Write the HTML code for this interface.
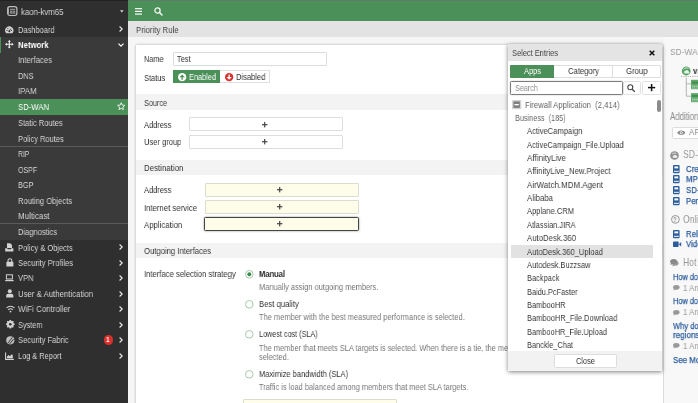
<!DOCTYPE html>
<html><head><meta charset="utf-8"><title>Priority Rule</title>
<style>
html,body{margin:0;padding:0}
body{width:698px;height:403px;overflow:hidden;position:relative;background:#f6f6f6;font-family:"Liberation Sans",sans-serif;font-size:9.3px;color:#333}
.a{position:absolute;box-sizing:border-box}
.t{position:absolute;white-space:pre;line-height:12px;transform-origin:0 0;will-change:transform}
svg{position:absolute;overflow:visible}
</style></head><body>
<div class="a" style="left:128px;top:0px;width:570px;height:21px;background:#4b9059;border-top:1px solid #5f7d65"></div>
<div class="a" style="left:128px;top:21px;width:570px;height:16px;background:#e3e3e3"></div>
<span class="t" style="left:136.00px;top:23.96px;color:#444;transform:scaleX(0.8412);">Priority Rule</span>
<svg style="left:134.6px;top:8px" width="8" height="7" viewBox="0 0 8 7"><g fill="#fff"><rect x="0" y="0.1" width="7" height="1.15"/><rect x="0" y="2.8" width="7" height="1.15"/><rect x="0" y="5.5" width="7" height="1.15"/></g></svg>
<svg style="left:154px;top:7.2px" width="9" height="9" viewBox="0 0 9 9"><circle cx="3.5" cy="3.5" r="2.6" fill="none" stroke="#f4f8f4" stroke-width="1.3"/><path d="M5.5 5.5L8 8" stroke="#f4f8f4" stroke-width="1.5" stroke-linecap="round"/></svg>
<div class="a" style="left:135.5px;top:44.5px;width:527px;height:370px;background:#fff;box-shadow:0 0 2.5px rgba(0,0,0,.32)"></div>
<div class="a" style="left:663.5px;top:37px;width:40px;height:370px;background:#f8f8f8"></div>
<span class="t" style="left:143.60px;top:53.26px;color:#333;transform:scaleX(0.7819);">Name</span>
<div class="a" style="left:172.6px;top:52.2px;width:154.2px;height:13.4px;background:#fff;border:1px solid #dcdcdc;border-radius:1px"></div>
<span class="t" style="left:177.00px;top:53.26px;color:#333;transform:scaleX(0.7971);">Test</span>
<span class="t" style="left:143.60px;top:72.36px;color:#333;transform:scaleX(0.8043);">Status</span>
<div class="a" style="left:172.6px;top:70px;width:47px;height:12.8px;background:#4b9059"></div>
<div class="a" style="left:219.6px;top:70px;width:50px;height:12.8px;background:#fff;border:1px solid #dfdfdf;border-left:none"></div>
<svg style="left:177.6px;top:72.7px" width="8.3" height="8.3" viewBox="0 0 8 8"><circle cx="4" cy="4" r="4" fill="#fff"/><path d="M4 1.4L6.6 4.1H4.65V6.5H3.35V4.1H1.4Z" fill="#4b9059"/></svg>
<span class="t" style="left:188.60px;top:71.16px;color:#fff;transform:scaleX(0.7912);">Enabled</span>
<svg style="left:224.8px;top:72.7px" width="8.3" height="8.3" viewBox="0 0 8 8"><circle cx="4" cy="4" r="4" fill="#d9302c"/><path d="M4 6.6L6.6 3.9H4.65V1.5H3.35V3.9H1.4Z" fill="#fff"/></svg>
<span class="t" style="left:235.60px;top:71.16px;color:#333;transform:scaleX(0.8124);">Disabled</span>
<div class="a" style="left:135.5px;top:94.4px;width:527px;height:15.4px;background:#f3f3f3"></div>
<span class="t" style="left:143.60px;top:96.56px;color:#333;transform:scaleX(0.7805);">Source</span>
<div class="a" style="left:135.5px;top:160px;width:527px;height:15px;background:#f3f3f3"></div>
<span class="t" style="left:143.60px;top:161.96px;color:#333;transform:scaleX(0.8470);">Destination</span>
<div class="a" style="left:135.5px;top:243px;width:527px;height:15px;background:#f3f3f3"></div>
<span class="t" style="left:143.60px;top:244.96px;color:#333;transform:scaleX(0.8257);">Outgoing Interfaces</span>
<span class="t" style="left:143.60px;top:118.86px;color:#333;transform:scaleX(0.8033);">Address</span>
<div class="a" style="left:188.6px;top:117.4px;width:154px;height:13.5px;background:#fff;border:1px solid #dedede;border-radius:1px"></div>
<svg style="left:261.7px;top:121.5px" width="5.4" height="5.4"><rect x="0" y="2.1" width="5.4" height="1.2" fill="#444"/><rect x="2.1" y="0" width="1.2" height="5.4" fill="#444"/></svg>
<span class="t" style="left:143.60px;top:135.86px;color:#333;transform:scaleX(0.8130);">User group</span>
<div class="a" style="left:188.6px;top:135.1px;width:154px;height:13.5px;background:#fff;border:1px solid #dedede;border-radius:1px"></div>
<svg style="left:261.7px;top:139.10000000000002px" width="5.4" height="5.4"><rect x="0" y="2.1" width="5.4" height="1.2" fill="#444"/><rect x="2.1" y="0" width="1.2" height="5.4" fill="#444"/></svg>
<span class="t" style="left:143.60px;top:183.66px;color:#333;transform:scaleX(0.8033);">Address</span>
<div class="a" style="left:204.5px;top:183.2px;width:154px;height:13.6px;background:#fdfde9;border:1px solid #dcdcd0;border-radius:1px"></div>
<svg style="left:277.3px;top:187.10000000000002px" width="5.4" height="5.4"><rect x="0" y="2.1" width="5.4" height="1.2" fill="#444"/><rect x="2.1" y="0" width="1.2" height="5.4" fill="#444"/></svg>
<span class="t" style="left:143.60px;top:201.66px;color:#333;transform:scaleX(0.8338);">Internet service</span>
<div class="a" style="left:204.5px;top:200.4px;width:154px;height:13.6px;background:#fdfde9;border:1px solid #dcdcd0;border-radius:1px"></div>
<svg style="left:277.3px;top:204.3px" width="5.4" height="5.4"><rect x="0" y="2.1" width="5.4" height="1.2" fill="#444"/><rect x="2.1" y="0" width="1.2" height="5.4" fill="#444"/></svg>
<span class="t" style="left:143.60px;top:218.86px;color:#333;transform:scaleX(0.8398);">Application</span>
<div class="a" style="left:204.3px;top:217.2px;width:154.4px;height:14px;background:#fdfde9;border:1px solid #444;border-radius:1.5px;box-shadow:0 0 2px rgba(0,0,0,.5)"></div>
<svg style="left:277.3px;top:221.3px" width="5.4" height="5.4"><rect x="0" y="2.1" width="5.4" height="1.2" fill="#444"/><rect x="2.1" y="0" width="1.2" height="5.4" fill="#444"/></svg>
<span class="t" style="left:143.60px;top:268.26px;color:#333;transform:scaleX(0.8262);">Interface selection strategy</span>
<svg style="left:244.5px;top:270.09999999999997px" width="8.6" height="8.6" viewBox="0 0 8.6 8.6"><circle cx="4.3" cy="4.3" r="3.8" fill="#fff" stroke="#9cc3a4" stroke-width="0.9"/><circle cx="4.3" cy="4.3" r="2" fill="#3f8a4d"/></svg>
<span class="t" style="left:259.00px;top:268.26px;color:#222;transform:scaleX(0.8117);font-weight:bold;">Manual</span>
<span class="t" style="left:259.00px;top:281.46px;color:#777;transform:scaleX(0.8023);">Manually assign outgoing members.</span>
<svg style="left:244.5px;top:300.09999999999997px" width="8.6" height="8.6" viewBox="0 0 8.6 8.6"><circle cx="4.3" cy="4.3" r="3.8" fill="#fff" stroke="#9cc3a4" stroke-width="0.9"/></svg>
<span class="t" style="left:259.00px;top:298.26px;color:#333;transform:scaleX(0.8281);">Best quality</span>
<span class="t" style="left:259.00px;top:311.46px;color:#777;transform:scaleX(0.8062);">The member with the best measured performance is selected.</span>
<svg style="left:244.5px;top:330.09999999999997px" width="8.6" height="8.6" viewBox="0 0 8.6 8.6"><circle cx="4.3" cy="4.3" r="3.8" fill="#fff" stroke="#9cc3a4" stroke-width="0.9"/></svg>
<span class="t" style="left:259.00px;top:328.26px;color:#333;transform:scaleX(0.7768);">Lowest cost (SLA)</span>
<span class="t" style="left:259.00px;top:341.86px;color:#777;transform:scaleX(0.7981);">The member that meets SLA targets is selected. When there is a tie, the member</span>
<span class="t" style="left:259.00px;top:350.86px;color:#777;transform:scaleX(0.8007);">selected.</span>
<svg style="left:244.5px;top:369.5px" width="8.6" height="8.6" viewBox="0 0 8.6 8.6"><circle cx="4.3" cy="4.3" r="3.8" fill="#fff" stroke="#9cc3a4" stroke-width="0.9"/></svg>
<span class="t" style="left:259.00px;top:367.66px;color:#333;transform:scaleX(0.8049);">Maximize bandwidth (SLA)</span>
<span class="t" style="left:259.00px;top:380.86px;color:#777;transform:scaleX(0.7992);">Traffic is load balanced among members that meet SLA targets.</span>
<div class="a" style="left:243.4px;top:399.4px;width:154px;height:13.2px;background:#fdfde9;border:1px solid #dcdcd0;border-radius:1px"></div>
<div class="a" style="left:0px;top:0px;width:128px;height:403px;background:#2f2f2f"></div>
<div class="a" style="left:0px;top:0px;width:128px;height:1px;background:#222"></div>
<div class="a" style="left:0px;top:37px;width:128px;height:203px;background:#3a3a3a"></div>
<div class="a" style="left:0px;top:37px;width:1.2px;height:15.5px;background:#4b9059"></div>
<div class="a" style="left:0px;top:98.8px;width:128px;height:15.8px;background:#4b9059"></div>
<div class="a" style="left:0px;top:145.6px;width:128px;height:1px;background:#5a5a5a"></div>
<div class="a" style="left:0px;top:223.4px;width:128px;height:1px;background:#5a5a5a"></div>
<span class="t" style="left:20.60px;top:5.76px;color:#d6d6d6;transform:scaleX(0.8373);">kaon-kvm65</span>
<span class="t" style="left:18.00px;top:23.56px;color:#d6d6d6;transform:scaleX(0.8047);">Dashboard</span>
<svg style="left:118.6px;top:26.4px" width="4" height="6" viewBox="0 0 4 6"><path d="M0.6 0.5L3.2 3L0.6 5.5" fill="none" stroke="#eee" stroke-width="1.1"/></svg>
<span class="t" style="left:18.00px;top:38.76px;color:#fff;transform:scaleX(0.8341);font-weight:bold;">Network</span>
<span class="t" style="left:18.00px;top:54.36px;color:#d6d6d6;transform:scaleX(0.8328);">Interfaces</span>
<span class="t" style="left:18.00px;top:69.76px;color:#d6d6d6;transform:scaleX(0.7841);">DNS</span>
<span class="t" style="left:18.00px;top:85.16px;color:#d6d6d6;transform:scaleX(0.8437);">IPAM</span>
<span class="t" style="left:18.00px;top:100.76px;color:#fff;transform:scaleX(0.8298);">SD-WAN</span>
<span class="t" style="left:18.00px;top:117.16px;color:#d6d6d6;transform:scaleX(0.8066);">Static Routes</span>
<span class="t" style="left:18.00px;top:132.56px;color:#d6d6d6;transform:scaleX(0.8022);">Policy Routes</span>
<span class="t" style="left:18.00px;top:148.36px;color:#d6d6d6;transform:scaleX(0.7355);">RIP</span>
<span class="t" style="left:18.00px;top:163.76px;color:#d6d6d6;transform:scaleX(0.7506);">OSPF</span>
<span class="t" style="left:18.00px;top:179.36px;color:#d6d6d6;transform:scaleX(0.7841);">BGP</span>
<span class="t" style="left:18.00px;top:194.76px;color:#d6d6d6;transform:scaleX(0.8162);">Routing Objects</span>
<span class="t" style="left:18.00px;top:210.16px;color:#d6d6d6;transform:scaleX(0.8613);">Multicast</span>
<span class="t" style="left:18.00px;top:225.96px;color:#d6d6d6;transform:scaleX(0.8114);">Diagnostics</span>
<span class="t" style="left:18.00px;top:241.56px;color:#d6d6d6;transform:scaleX(0.8096);">Policy &amp; Objects</span>
<svg style="left:118.6px;top:244.4px" width="4" height="6" viewBox="0 0 4 6"><path d="M0.6 0.5L3.2 3L0.6 5.5" fill="none" stroke="#eee" stroke-width="1.1"/></svg>
<span class="t" style="left:18.00px;top:257.16px;color:#d6d6d6;transform:scaleX(0.8188);">Security Profiles</span>
<svg style="left:118.6px;top:260px" width="4" height="6" viewBox="0 0 4 6"><path d="M0.6 0.5L3.2 3L0.6 5.5" fill="none" stroke="#eee" stroke-width="1.1"/></svg>
<span class="t" style="left:18.00px;top:272.36px;color:#d6d6d6;transform:scaleX(0.8052);">VPN</span>
<svg style="left:118.6px;top:275.2px" width="4" height="6" viewBox="0 0 4 6"><path d="M0.6 0.5L3.2 3L0.6 5.5" fill="none" stroke="#eee" stroke-width="1.1"/></svg>
<span class="t" style="left:18.00px;top:287.96px;color:#d6d6d6;transform:scaleX(0.8389);">User &amp; Authentication</span>
<svg style="left:118.6px;top:290.8px" width="4" height="6" viewBox="0 0 4 6"><path d="M0.6 0.5L3.2 3L0.6 5.5" fill="none" stroke="#eee" stroke-width="1.1"/></svg>
<span class="t" style="left:18.00px;top:303.36px;color:#d6d6d6;transform:scaleX(0.8522);">WiFi Controller</span>
<svg style="left:118.6px;top:306.2px" width="4" height="6" viewBox="0 0 4 6"><path d="M0.6 0.5L3.2 3L0.6 5.5" fill="none" stroke="#eee" stroke-width="1.1"/></svg>
<span class="t" style="left:18.00px;top:318.76px;color:#d6d6d6;transform:scaleX(0.7871);">System</span>
<svg style="left:118.6px;top:321.6px" width="4" height="6" viewBox="0 0 4 6"><path d="M0.6 0.5L3.2 3L0.6 5.5" fill="none" stroke="#eee" stroke-width="1.1"/></svg>
<span class="t" style="left:18.00px;top:334.16px;color:#d6d6d6;transform:scaleX(0.8161);">Security Fabric</span>
<svg style="left:118.6px;top:337px" width="4" height="6" viewBox="0 0 4 6"><path d="M0.6 0.5L3.2 3L0.6 5.5" fill="none" stroke="#eee" stroke-width="1.1"/></svg>
<span class="t" style="left:18.00px;top:349.96px;color:#d6d6d6;transform:scaleX(0.7920);">Log &amp; Report</span>
<svg style="left:118.6px;top:352.8px" width="4" height="6" viewBox="0 0 4 6"><path d="M0.6 0.5L3.2 3L0.6 5.5" fill="none" stroke="#eee" stroke-width="1.1"/></svg>
<svg style="left:118.2px;top:42.8px" width="6" height="4" viewBox="0 0 6 4"><path d="M0.5 0.6L3 3.2L5.5 0.6" fill="none" stroke="#fff" stroke-width="1.2"/></svg>
<svg style="left:119.6px;top:10px" width="4" height="3" viewBox="0 0 4 3"><path d="M0 0.3H3.6L1.8 2.4Z" fill="#ddd"/></svg>
<svg style="left:117.2px;top:102.2px" width="8.4" height="8.4" viewBox="0 0 10 10"><path d="M5 0.9L6.25 3.7L9.3 4L7 6.05L7.65 9.1L5 7.5L2.35 9.1L3 6.05L0.7 4L3.75 3.7Z" fill="none" stroke="#fff" stroke-width="1"/></svg>
<div class="a" style="left:103.6px;top:335.4px;width:9.2px;height:9.2px;border-radius:50%;background:#d9302c"></div>
<span class="t" style="left:106.44px;top:334.23px;color:#fff;transform:scaleX(0.8450);font-size:7.5px;font-weight:bold;">1</span>
<svg style="left:7.3px;top:5.800000000000001px" width="10.6" height="10.2" viewBox="0 0 10.6 10.2"><rect x="0.7" y="0.7" width="9.2" height="8.8" rx="2.2" fill="none" stroke="#bdbdbd" stroke-width="1.2"/><path d="M1.2 2.4V7.8" stroke="#cfcfcf" stroke-width="1"/><rect x="3" y="2.8" width="5.2" height="1.1" fill="#9a9a9a"/><rect x="3" y="4.7" width="5.2" height="2.9" fill="#a8a8a8"/><path d="M3 6.1H8.2M5.6 4.7V7.6" stroke="#2f2f2f" stroke-width="0.5"/></svg>
<svg style="left:5.4px;top:25.7px" width="8.6" height="8" viewBox="0 0 8.6 8"><path d="M1.2 7.2A4.1 4.1 0 1 1 7.4 7.2Z" fill="#d2d2d2"/><circle cx="4.3" cy="5.2" r="1" fill="#2f2f2f"/><path d="M4.3 5.2L5.8 2.6" stroke="#2f2f2f" stroke-width="0.8"/><circle cx="2" cy="4.4" r="0.55" fill="#2f2f2f"/><circle cx="6.6" cy="4.4" r="0.55" fill="#2f2f2f"/><circle cx="2.9" cy="2.5" r="0.55" fill="#2f2f2f"/></svg>
<svg style="left:5.4px;top:40.4px" width="8.6" height="8.6" viewBox="0 0 9 9"><path d="M4.5 0L6.1 1.9H5.05V3.95H7.1V2.9L9 4.5L7.1 6.1V5.05H5.05V7.1H6.1L4.5 9L2.9 7.1H3.95V5.05H1.9V6.1L0 4.5L1.9 2.9V3.95H3.95V1.9H2.9Z" fill="#f6f6f6"/></svg>
<svg style="left:5.4px;top:242.9px" width="8.8" height="9" viewBox="0 0 8.8 9"><path d="M2 0.2H5.2L7 2V5H2Z" fill="#d2d2d2"/><path d="M0.2 5.2H2.2L2.8 6.2H5.8L6.4 5.2H8.4V8.6H0.2Z" fill="#d2d2d2"/></svg>
<svg style="left:6px;top:258.3px" width="8" height="9" viewBox="0 0 8 9"><path d="M2 4V2.6A1.9 1.9 0 0 1 5.8 2.6V4" fill="none" stroke="#d2d2d2" stroke-width="1.1"/><rect x="0.4" y="3.8" width="7" height="4.8" rx="0.6" fill="#d2d2d2"/></svg>
<svg style="left:5.4px;top:274.2px" width="9" height="8" viewBox="0 0 9 8"><rect x="1.4" y="0.8" width="6" height="4.2" fill="none" stroke="#d2d2d2" stroke-width="1"/><rect x="0.2" y="6" width="8.4" height="1.2" fill="#d2d2d2"/></svg>
<svg style="left:6px;top:289.1px" width="8" height="9" viewBox="0 0 8 9"><circle cx="3.8" cy="2.2" r="2" fill="#d2d2d2"/><path d="M0.2 8.6V6.6A2 2 0 0 1 2.2 4.8H5.4A2 2 0 0 1 7.4 6.6V8.6Z" fill="#d2d2d2"/></svg>
<svg style="left:5.6px;top:305.0px" width="9" height="8" viewBox="0 0 9 8"><path d="M0.5 3A5.4 5.4 0 0 1 8.5 3" fill="none" stroke="#d2d2d2" stroke-width="1.1"/><path d="M2.2 4.8A3.2 3.2 0 0 1 6.8 4.8" fill="none" stroke="#d2d2d2" stroke-width="1.1"/><circle cx="4.5" cy="6.6" r="0.9" fill="#d2d2d2"/></svg>
<svg style="left:5.6px;top:320.3px" width="8.6" height="8.6" viewBox="0 0 8.6 8.6"><circle cx="4.3" cy="4.3" r="2.5" fill="none" stroke="#d2d2d2" stroke-width="1.9"/><g stroke="#d2d2d2" stroke-width="1.6"><path d="M4.3 0V8.6M0 4.3H8.6M1.3 1.3L7.3 7.3M7.3 1.3L1.3 7.3"/></g><circle cx="4.3" cy="4.3" r="1.3" fill="#2f2f2f"/></svg>
<svg style="left:5.6px;top:335.7px" width="8.6" height="8.6" viewBox="0 0 8.6 8.6"><circle cx="4.3" cy="4.3" r="4.1" fill="#bdbdbd"/><path d="M2 7L6.4 1.4M3.6 8L7.6 3" stroke="#2f2f2f" stroke-width="0.9" fill="none"/></svg>
<svg style="left:5.4px;top:351.6px" width="9" height="8" viewBox="0 0 9 8"><path d="M0.6 0.6V7.4H8.8" fill="none" stroke="#d2d2d2" stroke-width="1.1"/><path d="M2 6.2V4.4L3.6 3L5 4.2L6.6 2.2L7.8 3.2V6.2Z" fill="#d2d2d2"/></svg>
<span class="t" style="left:669.90px;top:46.44px;color:#999;transform:scaleX(0.8517);font-size:9.9px;">SD-WAN</span>
<svg style="left:680px;top:64.5px" width="20" height="40" viewBox="0 0 20 40"><circle cx="6.2" cy="6" r="4.4" fill="#57a266"/><path d="M3.4 4.4C4.6 2.6 7 2.4 8.4 3.6" fill="none" stroke="#dff0e2" stroke-width="0.9"/><path d="M4.6 8.4A1.5 1.5 0 0 1 5.4 5.8A2 2 0 0 1 8.8 6.4A1.2 1.2 0 0 1 8.8 8.4Z" fill="#e6f3e8"/><path d="M1 11.4H20" stroke="#888" stroke-width="0.7" stroke-dasharray="0.9 0.9"/><path d="M6.3 12.4V31.2H11M6.3 18.8H11" fill="none" stroke="#9a9a9a" stroke-width="0.7"/><rect x="11" y="14.8" width="9" height="9" fill="#5fa76d"/><rect x="11" y="28.1" width="9" height="8.8" fill="#5fa76d"/><path d="M12 17.6H20M12 30.9H20" stroke="#3f8a4d" stroke-width="1.6"/><path d="M12 21.4H20M12 34.6H20" stroke="#a9d3b1" stroke-width="2" stroke-dasharray="1.4 0.7"/><path d="M11 24.5H20M11 37.6H20" stroke="#8dbf97" stroke-width="0.6" stroke-dasharray="0.8 0.8"/></svg>
<span class="t" style="left:692.80px;top:64.66px;color:#333;transform:scaleX(0.8450);font-weight:bold;">vi</span>
<span class="t" style="left:670.20px;top:111.23px;color:#8a8a8a;transform:scaleX(0.7878);font-size:10px;">Additional</span>
<div class="a" style="left:672.2px;top:126.6px;width:40px;height:12.2px;background:#fff;border:1px solid #ddd;border-radius:1.5px"></div>
<svg style="left:676.8px;top:129.6px" width="8.6" height="5.6" viewBox="0 0 8.6 5.6"><path d="M0.2 2.8C2 -0.2 6.6 -0.2 8.4 2.8C6.6 5.8 2 5.8 0.2 2.8Z" fill="#8a8a8a"/><circle cx="4.3" cy="2.8" r="1.5" fill="#fff"/><circle cx="4.3" cy="2.8" r="0.8" fill="#8a8a8a"/></svg>
<span class="t" style="left:688.70px;top:126.25px;color:#8a8a8a;transform:scaleX(0.8450);font-size:9.6px;">API</span>
<svg style="left:670.4px;top:150.6px" width="9" height="9" viewBox="0 0 9 9"><circle cx="4.5" cy="4.5" r="4.3" fill="#8f8f8f"/><path d="M2 3.2C3 1.8 5 1.6 6.4 2.6" fill="none" stroke="#f4f4f4" stroke-width="0.8"/><path d="M3 6.8A1.3 1.3 0 0 1 3.8 4.6A1.8 1.8 0 0 1 6.8 5A1.1 1.1 0 0 1 6.8 6.8Z" fill="#f4f4f4"/></svg>
<span class="t" style="left:682.80px;top:149.03px;color:#999;transform:scaleX(0.8450);font-size:10.2px;">SD-W</span>
<svg style="left:673.3px;top:164.9px" width="6.6" height="8.2" viewBox="0 0 6.6 8.2"><rect x="0" y="0" width="6.6" height="8.2" rx="1" fill="#2b5c9c"/><rect x="1.4" y="1.4" width="3.8" height="2" fill="#fff"/><rect x="1" y="5.8" width="4.8" height="1" fill="#fff"/></svg>
<span class="t" style="left:685.60px;top:162.86px;color:#2b5c9c;transform:scaleX(0.8450);-webkit-text-stroke:0.25px #2b5c9c;">Crea</span>
<svg style="left:673.3px;top:175.3px" width="6.6" height="8.2" viewBox="0 0 6.6 8.2"><rect x="0" y="0" width="6.6" height="8.2" rx="1" fill="#2b5c9c"/><rect x="1.4" y="1.4" width="3.8" height="2" fill="#fff"/><rect x="1" y="5.8" width="4.8" height="1" fill="#fff"/></svg>
<span class="t" style="left:685.60px;top:173.26px;color:#2b5c9c;transform:scaleX(0.8450);-webkit-text-stroke:0.25px #2b5c9c;">MPL</span>
<svg style="left:673.3px;top:185.70000000000002px" width="6.6" height="8.2" viewBox="0 0 6.6 8.2"><rect x="0" y="0" width="6.6" height="8.2" rx="1" fill="#2b5c9c"/><rect x="1.4" y="1.4" width="3.8" height="2" fill="#fff"/><rect x="1" y="5.8" width="4.8" height="1" fill="#fff"/></svg>
<span class="t" style="left:685.60px;top:183.66px;color:#2b5c9c;transform:scaleX(0.8450);-webkit-text-stroke:0.25px #2b5c9c;">SD-</span>
<svg style="left:673.3px;top:196.9px" width="6.6" height="8.2" viewBox="0 0 6.6 8.2"><rect x="0" y="0" width="6.6" height="8.2" rx="1" fill="#2b5c9c"/><rect x="1.4" y="1.4" width="3.8" height="2" fill="#fff"/><rect x="1" y="5.8" width="4.8" height="1" fill="#fff"/></svg>
<span class="t" style="left:685.60px;top:194.86px;color:#2b5c9c;transform:scaleX(0.8450);-webkit-text-stroke:0.25px #2b5c9c;">Per </span>
<svg style="left:670.6px;top:215.4px" width="8.8" height="8.8" viewBox="0 0 8.8 8.8"><circle cx="4.4" cy="4.4" r="3.9" fill="none" stroke="#8a8a8a" stroke-width="0.9"/></svg>
<span class="t" style="left:673.19px;top:213.74px;color:#8a8a8a;transform:scaleX(0.8450);font-size:7px;font-weight:bold;">?</span>
<span class="t" style="left:683.00px;top:213.83px;color:#999;transform:scaleX(0.8450);font-size:10.2px;">Online</span>
<svg style="left:673.3px;top:229.70000000000002px" width="6.6" height="8.2" viewBox="0 0 6.6 8.2"><rect x="0" y="0" width="6.6" height="8.2" rx="1" fill="#2b5c9c"/><rect x="1.4" y="1.4" width="3.8" height="2" fill="#fff"/><rect x="1" y="5.8" width="4.8" height="1" fill="#fff"/></svg>
<span class="t" style="left:685.60px;top:227.66px;color:#2b5c9c;transform:scaleX(0.8450);-webkit-text-stroke:0.25px #2b5c9c;">Rele</span>
<svg style="left:673px;top:241.2px" width="8.4" height="6.4" viewBox="0 0 8.4 6.4"><rect x="0" y="0.4" width="5.6" height="5.6" rx="0.8" fill="#2b5c9c"/><path d="M5.8 3.2L8.2 1V5.4Z" fill="#2b5c9c"/></svg>
<span class="t" style="left:685.60px;top:238.26px;color:#2b5c9c;transform:scaleX(0.8450);-webkit-text-stroke:0.25px #2b5c9c;">Vide</span>
<svg style="left:672.4px;top:261.15px" width="6.6499999999999995" height="5.699999999999999" viewBox="0 0 7 6"><ellipse cx="3.5" cy="2.5" rx="3.4" ry="2.4" fill="#9a9a9a"/><path d="M1 3.6L0.4 5.8L3 4.6Z" fill="#9a9a9a"/></svg>
<svg style="left:669.8px;top:258.85px" width="7.3500000000000005" height="6.300000000000001" viewBox="0 0 7 6"><ellipse cx="3.5" cy="2.5" rx="3.4" ry="2.4" fill="#8a8a8a"/><path d="M1 3.6L0.4 5.8L3 4.6Z" fill="#8a8a8a"/></svg>
<span class="t" style="left:683.00px;top:257.03px;color:#999;transform:scaleX(0.8450);font-size:10.2px;">Hot Q</span>
<span class="t" style="left:672.60px;top:270.86px;color:#2b5c9c;transform:scaleX(0.7929);-webkit-text-stroke:0.25px #2b5c9c;">How do</span>
<span class="t" style="left:672.60px;top:295.16px;color:#2b5c9c;transform:scaleX(0.7929);-webkit-text-stroke:0.25px #2b5c9c;">How do</span>
<span class="t" style="left:672.60px;top:319.86px;color:#2b5c9c;transform:scaleX(0.8119);-webkit-text-stroke:0.25px #2b5c9c;">Why do</span>
<span class="t" style="left:672.60px;top:329.36px;color:#2b5c9c;transform:scaleX(0.8690);-webkit-text-stroke:0.25px #2b5c9c;">regions?</span>
<span class="t" style="left:672.60px;top:353.86px;color:#2b5c9c;transform:scaleX(0.8558);-webkit-text-stroke:0.25px #2b5c9c;">See More</span>
<svg style="left:672.6px;top:285.15px" width="6.6499999999999995" height="5.699999999999999" viewBox="0 0 7 6"><ellipse cx="3.5" cy="2.5" rx="3.4" ry="2.4" fill="#999"/><path d="M1 3.6L0.4 5.8L3 4.6Z" fill="#999"/></svg>
<span class="t" style="left:683.00px;top:281.86px;color:#999;transform:scaleX(0.8450);">1 Ans</span>
<svg style="left:672.6px;top:309.65px" width="6.6499999999999995" height="5.699999999999999" viewBox="0 0 7 6"><ellipse cx="3.5" cy="2.5" rx="3.4" ry="2.4" fill="#999"/><path d="M1 3.6L0.4 5.8L3 4.6Z" fill="#999"/></svg>
<span class="t" style="left:683.00px;top:306.36px;color:#999;transform:scaleX(0.8450);">1 Ans</span>
<svg style="left:672.6px;top:343.34999999999997px" width="6.6499999999999995" height="5.699999999999999" viewBox="0 0 7 6"><ellipse cx="3.5" cy="2.5" rx="3.4" ry="2.4" fill="#999"/><path d="M1 3.6L0.4 5.8L3 4.6Z" fill="#999"/></svg>
<span class="t" style="left:683.00px;top:340.06px;color:#999;transform:scaleX(0.8450);">1 Ans</span>
<div class="a" style="left:508px;top:44.4px;width:154px;height:326.6px;background:#fff;box-shadow:0 1px 4px rgba(0,0,0,.5);border-radius:1px"></div>
<div class="a" style="left:508px;top:44.4px;width:154px;height:16.2px;background:#e4e4e4;border-radius:1px 1px 0 0"></div>
<span class="t" style="left:512.00px;top:46.86px;color:#444;transform:scaleX(0.8020);">Select Entries</span>
<svg style="left:649.4px;top:50px" width="6" height="6" viewBox="0 0 6 6"><path d="M0.7 0.7L5.3 5.3M5.3 0.7L0.7 5.3" stroke="#111" stroke-width="1.5"/></svg>
<div class="a" style="left:510.4px;top:64.8px;width:150.2px;height:12.8px;background:#fff;border:1px solid #ddd;border-radius:1px"></div>
<div class="a" style="left:510.4px;top:64.8px;width:44px;height:12.8px;background:#4b9059;border-radius:1px 0 0 1px"></div>
<div class="a" style="left:612px;top:64.8px;width:1px;height:12.8px;background:#ddd"></div>
<span class="t" style="left:524.00px;top:65.46px;color:#fff;transform:scaleX(0.8018);">Apps</span>
<span class="t" style="left:567.60px;top:65.46px;color:#333;transform:scaleX(0.8215);">Category</span>
<span class="t" style="left:625.65px;top:65.46px;color:#333;transform:scaleX(0.8319);">Group</span>
<div class="a" style="left:510.4px;top:81.4px;width:112.6px;height:13.2px;background:#fff;border:1px solid #7c7c7c;border-radius:1.5px;box-shadow:0 0 1.5px rgba(0,0,0,.3)"></div>
<span class="t" style="left:515.00px;top:82.06px;color:#8c8c8c;transform:scaleX(0.7737);">Search</span>
<div class="a" style="left:623.4px;top:81.2px;width:17.4px;height:13.4px;background:#fff;border:1px solid #e2e2e2;border-radius:1.5px"></div>
<svg style="left:626.6px;top:83.6px" width="8.4" height="8.4" viewBox="0 0 8.4 8.4"><circle cx="3.3" cy="3.3" r="2.5" fill="none" stroke="#444" stroke-width="1.1"/><path d="M5.2 5.2L7.8 7.8" stroke="#444" stroke-width="1.3"/></svg>
<div class="a" style="left:642.2px;top:81.2px;width:18.6px;height:13.4px;background:#fff;border:1px solid #e2e2e2;border-radius:1.5px"></div>
<svg style="left:648.0px;top:84.4px" width="7.2" height="7.2"><rect x="0" y="2.85" width="7.2" height="1.5" fill="#111"/><rect x="2.85" y="0" width="1.5" height="7.2" fill="#111"/></svg>
<svg style="left:512.3px;top:100.2px" width="9.3" height="9.3" viewBox="0 0 8.6 8.6"><rect width="8.6" height="8.6" rx="0.8" fill="#d4d4d4"/><rect x="1.3" y="1.3" width="6" height="6" fill="#7e7e7e"/><rect x="2.3" y="3.7" width="4" height="1.2" fill="#fff"/></svg>
<span class="t" style="left:525.00px;top:98.86px;color:#666;transform:scaleX(0.8283);">Firewall Application  (2,414)</span>
<span class="t" style="left:514.60px;top:112.46px;color:#666;transform:scaleX(0.7834);">Business  (185)</span>
<div class="a" style="left:511px;top:245px;width:142px;height:13.2px;background:#e2e2e2"></div>
<span class="t" style="left:527.00px;top:125.26px;color:#3a3a3a;transform:scaleX(0.8183);">ActiveCampaign</span>
<span class="t" style="left:527.00px;top:138.63px;color:#3a3a3a;transform:scaleX(0.8057);">ActiveCampaign_File.Upload</span>
<span class="t" style="left:527.00px;top:152.00px;color:#3a3a3a;transform:scaleX(0.8706);">AffinityLive</span>
<span class="t" style="left:527.00px;top:165.37px;color:#3a3a3a;transform:scaleX(0.8397);">AffinityLive_New.Project</span>
<span class="t" style="left:527.00px;top:178.74px;color:#3a3a3a;transform:scaleX(0.8536);">AirWatch.MDM.Agent</span>
<span class="t" style="left:527.00px;top:192.11px;color:#3a3a3a;transform:scaleX(0.8383);">Alibaba</span>
<span class="t" style="left:527.00px;top:205.48px;color:#3a3a3a;transform:scaleX(0.8121);">Applane.CRM</span>
<span class="t" style="left:527.00px;top:218.85px;color:#3a3a3a;transform:scaleX(0.8039);">Atlassian.JIRA</span>
<span class="t" style="left:527.00px;top:232.22px;color:#3a3a3a;transform:scaleX(0.8390);">AutoDesk.360</span>
<span class="t" style="left:527.00px;top:245.59px;color:#3a3a3a;transform:scaleX(0.8168);">AutoDesk.360_Upload</span>
<span class="t" style="left:527.00px;top:258.96px;color:#3a3a3a;transform:scaleX(0.8097);">Autodesk.Buzzsaw</span>
<span class="t" style="left:527.00px;top:272.33px;color:#3a3a3a;transform:scaleX(0.8037);">Backpack</span>
<span class="t" style="left:527.00px;top:285.70px;color:#3a3a3a;transform:scaleX(0.7961);">Baidu.PcFaster</span>
<span class="t" style="left:527.00px;top:299.07px;color:#3a3a3a;transform:scaleX(0.8031);">BambooHR</span>
<span class="t" style="left:527.00px;top:312.44px;color:#3a3a3a;transform:scaleX(0.8061);">BambooHR_File.Download</span>
<span class="t" style="left:527.00px;top:325.81px;color:#3a3a3a;transform:scaleX(0.7979);">BambooHR_File.Upload</span>
<span class="t" style="left:527.00px;top:339.18px;color:#3a3a3a;transform:scaleX(0.7946);">Banckle_Chat</span>
<div class="a" style="left:656.6px;top:99.6px;width:4.2px;height:12px;background:#8c8c8c;border-radius:2px"></div>
<div class="a" style="left:508px;top:351.2px;width:154px;height:19.8px;background:#f2f2f2;border-radius:0 0 1px 1px"></div>
<div class="a" style="left:554px;top:354.4px;width:62.8px;height:13.8px;background:#fff;border:1px solid #ddd;border-radius:1.5px"></div>
<span class="t" style="left:575.80px;top:355.46px;color:#333;transform:scaleX(0.7989);">Close</span>
</body></html>
